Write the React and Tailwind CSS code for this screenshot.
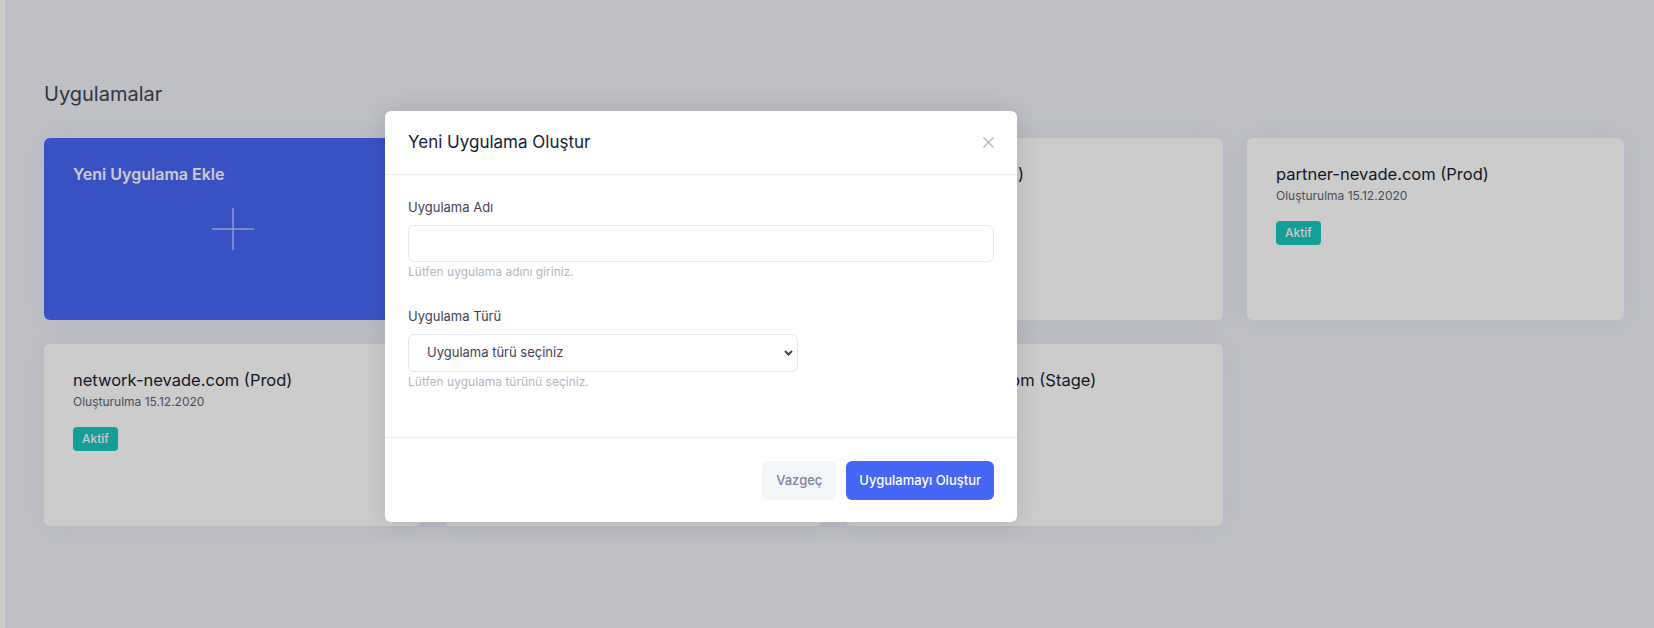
import React from 'react';

const apps = [
  { name: 'nevade.com (Stage)', created: '15.12.2020', active: true },
  { name: 'nevade.com (Prod)', created: '15.12.2020', active: true },
  { name: 'partner-nevade.com (Prod)', created: '15.12.2020', active: true },
  { name: 'network-nevade.com (Prod)', created: '15.12.2020', active: true },
  { name: 'network-nevade.com (Stage)', created: '15.12.2020', active: true },
  { name: 'partner-nevade.com (Stage)', created: '15.12.2020', active: true }
];

function NewAppCard() {
  return (
    <div className="relative h-[182px] rounded-[6px] bg-[#4667f6] px-[29px] pt-[26px] shadow-[0_0_30px_0_rgba(82,63,105,0.05)]">
      <h3 className="text-[16px] leading-5 font-semibold text-white">Yeni Uygulama Ekle</h3>
      <div className="absolute inset-0 flex items-center justify-center">
        <svg width="42" height="42" viewBox="0 0 42 42" fill="none">
          <path d="M21 0v42M0 21h42" stroke="rgba(255,255,255,0.6)" strokeWidth="1.5" />
        </svg>
      </div>
    </div>
  );
}

function AppCard({ app }) {
  return (
    <div className="h-[182px] rounded-[6px] bg-white px-[29px] pt-[26px] shadow-[0_0_30px_0_rgba(82,63,105,0.05)]">
      <h3 className="text-[16.5px] leading-5 text-[#181c32]">{app.name}</h3>
      <p className="mt-[3px] text-[12px] leading-[18px] text-[#5e6278]">Oluşturulma {app.created}</p>
      {app.active && (
        <span className="mt-[16px] inline-block h-6 rounded-[4px] bg-[#1bc5bd] px-[9px] text-[12px] leading-6 font-medium text-white">
          Aktif
        </span>
      )}
    </div>
  );
}

function CreateAppModal() {
  return (
    <div className="absolute left-[385px] top-[111px] w-[632px] rounded-[6px] bg-white shadow-[0_0_24px_0_rgba(0,0,0,0.12)]">
      {/* Header */}
      <div className="flex h-16 items-center justify-between border-b border-[#ebedf3] px-[23px]">
        <h5 className="text-[17px] font-normal text-[#181c32]">Yeni Uygulama Oluştur</h5>
        <button type="button" className="flex h-[11px] w-[11px] items-center justify-center">
          <svg width="11" height="11" viewBox="0 0 11 11" fill="none">
            <path d="M0.5 0.5l10 10M10.5 0.5l-10 10" stroke="#b5b5c3" strokeWidth="1.3" />
          </svg>
        </button>
      </div>

      {/* Body */}
      <div className="px-[23px] pt-[22px] pb-[46px]">
        <div>
          <label htmlFor="appName" className="block text-[13px] leading-5 text-[#3f4254]">
            Uygulama Adı
          </label>
          <input
            id="appName"
            type="text"
            className="mt-2 block h-[37px] w-full rounded-[6px] border border-[#e4e6ef] bg-white px-4 text-[13px] outline-none"
          />
          <p className="mt-[1px] text-[12px] leading-[18px] text-[#b5b5c3]">Lütfen uygulama adını giriniz.</p>
        </div>

        <div className="mt-[25px]">
          <label htmlFor="appType" className="block text-[13px] leading-5 text-[#3f4254]">
            Uygulama Türü
          </label>
          <div className="relative mt-2 w-[390px]">
            <select
              id="appType"
              defaultValue=""
              className="block h-[38px] w-full appearance-none rounded-[6px] border border-[#e4e6ef] bg-white pl-[18px] text-[13px] text-[#3f4254] outline-none"
            >
              <option value="">Uygulama türü seçiniz</option>
              <option value="web">Web</option>
              <option value="mobile">Mobil</option>
            </select>
            <svg
              className="pointer-events-none absolute right-[5px] top-1/2 -translate-y-1/2"
              width="9"
              height="6"
              viewBox="0 0 9 6"
              fill="none"
            >
              <path d="M1 1l3.5 3.5L8 1" stroke="#3f4254" strokeWidth="2" />
            </svg>
          </div>
          <p className="mt-[1px] text-[12px] leading-[18px] text-[#b5b5c3]">Lütfen uygulama türünü seçiniz.</p>
        </div>
      </div>

      {/* Footer */}
      <div className="flex justify-end gap-[10px] border-t border-[#ebedf3] px-[23px] pt-[23px] pb-[22px]">
        <button type="button" className="h-[39px] rounded-[6px] bg-[#f3f6f9] px-[14px] text-[13px] font-medium text-[#7e8299]">
          Vazgeç
        </button>
        <button type="button" className="h-[39px] rounded-[6px] bg-[#4667f6] px-[13px] text-[13px] font-medium text-white">
          Uygulamayı Oluştur
        </button>
      </div>
    </div>
  );
}

export default function App() {
  return (
    <div className="relative h-[628px] w-full overflow-hidden bg-[#eef0f8] font-['Inter',sans-serif]">
      <div className="flex h-full">
        <div className="w-[5px] shrink-0 bg-white" />
        <main className="flex-1 pl-[39px] pr-[30px] pt-[80px]">
          <h1 className="text-[20px] leading-[28px] text-[#3f4254]">Uygulamalar</h1>
          <div className="mt-[30px] grid grid-cols-4 gap-6">
            <NewAppCard />
            {apps.map(app => (
              <AppCard key={app.name} app={app} />
            ))}
          </div>
        </main>
      </div>

      {/* Modal backdrop */}
      <div className="absolute inset-0 bg-black/20" />
      <CreateAppModal />
    </div>
  );
}
